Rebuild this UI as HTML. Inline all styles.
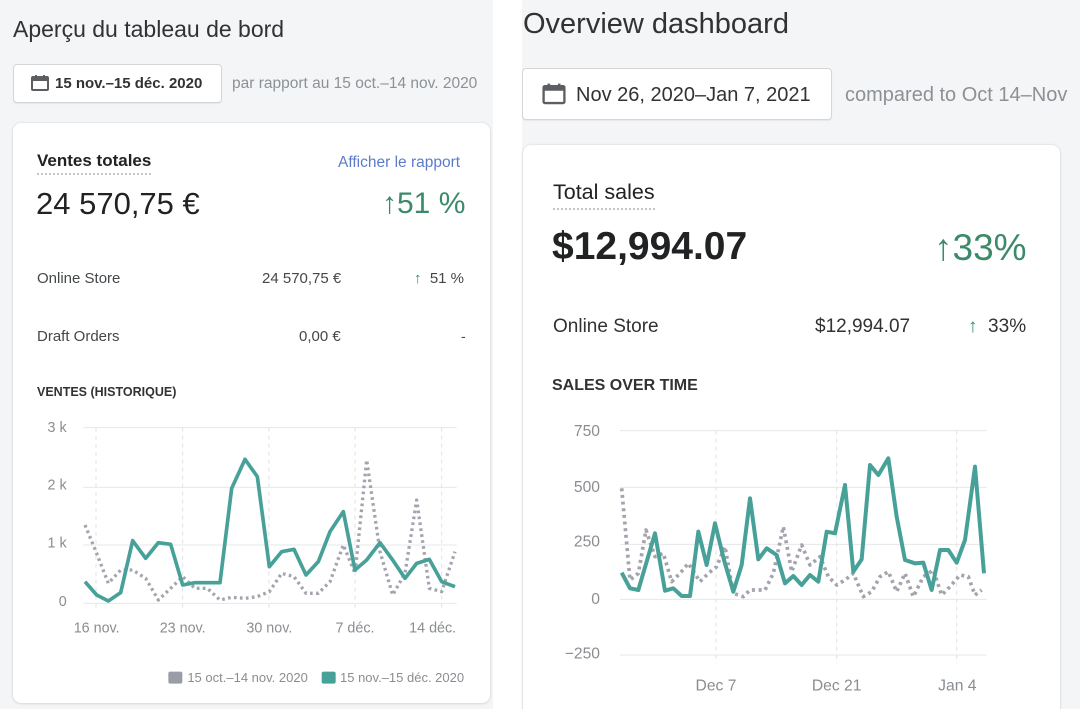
<!DOCTYPE html>
<html><head><meta charset="utf-8"><style>
*{margin:0;padding:0;box-sizing:border-box}
html,body{width:1080px;height:709px;overflow:hidden}
body{background:#fff;font-family:"Liberation Sans",sans-serif;color:#202223;position:relative}
.a{position:absolute;white-space:nowrap}
.bg{position:absolute;background:#f4f5f6}
.card{position:absolute;background:#fff;border-radius:8px;box-shadow:0 0 2px rgba(0,0,0,.12),0 1px 3px rgba(0,0,0,.08)}
.btn{position:absolute;background:#fff;border:1px solid #d4d6d8;border-radius:4px;box-shadow:0 1px 1px rgba(0,0,0,.06)}
.ul{border-bottom:2px dotted #c4c6c8}
</style></head><body>
<div class="bg" style="left:0;top:0;width:493px;height:709px"></div>
<div class="bg" style="left:522px;top:0;width:558px;height:709px"></div>

<!-- LEFT -->
<div class="a" style="left:13px;top:16px;font-size:23px;color:#303234">Aperçu du tableau de bord</div>
<div class="btn" style="left:13px;top:64px;width:209px;height:39px"></div>
<svg class="a" style="left:30px;top:73px" width="20" height="20" viewBox="0 0 20 20"><rect x="2" y="4" width="16" height="13" rx="1" fill="none" stroke="#5c5f62" stroke-width="2"/><rect x="2" y="4" width="16" height="4" fill="#5c5f62"/><rect x="5" y="2" width="2" height="3" fill="#5c5f62"/><rect x="13" y="2" width="2" height="3" fill="#5c5f62"/></svg>
<div class="a" style="left:55px;top:75px;font-size:15px;font-weight:bold;color:#303234">15 nov.–15 déc. 2020</div>
<div class="a" style="left:232px;top:75px;font-size:15.5px;color:#8c9196">par rapport au 15 oct.–14 nov. 2020</div>
<div class="card" style="left:13px;top:123px;width:477px;height:580px"></div>
<div class="a ul" style="left:37px;top:151px;font-size:17px;font-weight:bold;color:#202223;padding-bottom:2px">Ventes totales</div>
<div class="a" style="left:338px;top:154px;font-size:15.5px;color:#5c7cc8">Afficher le rapport</div>
<div class="a" style="left:36px;top:186px;font-size:31px;color:#202223">24 570,75 €</div>
<div class="a" style="left:382px;top:187px;font-size:30px;color:#3d8a6a">↑51 %</div>
<div class="a" style="left:37px;top:270px;font-size:15px;color:#44474a">Online Store</div>
<div class="a" style="left:262px;top:270px;font-size:15px;color:#44474a">24 570,75 €</div>
<div class="a" style="left:414px;top:270px;font-size:15px;color:#44474a"><span style="color:#3d8a6a">↑</span>&nbsp; 51 %</div>
<div class="a" style="left:37px;top:328px;font-size:15px;color:#44474a">Draft Orders</div>
<div class="a" style="left:299px;top:328px;font-size:15px;color:#44474a">0,00 €</div>
<div class="a" style="left:461px;top:328px;font-size:14px;color:#44474a">-</div>
<div class="a" style="left:37px;top:385px;font-size:12.5px;font-weight:bold;color:#303234">VENTES (HISTORIQUE)</div>

<svg class="a" style="left:0;top:400px" width="500" height="309" viewBox="0 0 1500 927">
<g stroke="#e6e7e9" stroke-width="3"><line x1="250" y1="83" x2="1370" y2="83"/><line x1="250" y1="262" x2="1370" y2="262"/><line x1="250" y1="435" x2="1370" y2="435"/><line x1="250" y1="610" x2="1370" y2="610"/></g>
<g stroke="#e0e1e3" stroke-width="3" stroke-dasharray="12 12"><line x1="288" y1="83" x2="288" y2="630"/><line x1="548" y1="83" x2="548" y2="630"/><line x1="807" y1="83" x2="807" y2="630"/><line x1="1065" y1="83" x2="1065" y2="630"/><line x1="1325" y1="83" x2="1325" y2="630"/></g>
<g font-size="43" fill="#8a8d91" font-family="Liberation Sans,sans-serif"><text x="200" y="96" text-anchor="end">3 k</text><text x="200" y="268" text-anchor="end">2 k</text><text x="200" y="442" text-anchor="end">1 k</text><text x="200" y="618" text-anchor="end">0</text>
<text x="290" y="697" text-anchor="middle">16 nov.</text><text x="548" y="697" text-anchor="middle">23 nov.</text><text x="808" y="697" text-anchor="middle">30 nov.</text><text x="1065" y="697" text-anchor="middle">7 déc.</text><text x="1298" y="697" text-anchor="middle">14 déc.</text>
<text x="562" y="846" font-size="39">15 oct.–14 nov. 2020</text><text x="1020" y="846" font-size="39">15 nov.–15 déc. 2020</text></g>
<rect x="505" y="815" width="42" height="36" rx="6" fill="#9a9ca8"/><rect x="965" y="815" width="42" height="36" rx="6" fill="#47a199"/>
<polyline fill="none" stroke="#a3a4ad" stroke-width="10" stroke-dasharray="8 10" stroke-linejoin="round" points="255,375 290,460 325,550 362,510 398,510 437,535 475,600 512,565 548,530 585,565 622,565 660,600 695,592 735,595 772,590 808,575 845,520 882,530 918,580 955,580 990,545 1030,435 1065,520 1100,180 1140,455 1178,585 1215,520 1250,300 1288,565 1325,575 1365,455"/>
<polyline fill="none" stroke="#47a199" stroke-width="11" stroke-linejoin="round" points="255,545 290,585 325,603 362,578 398,422 437,475 475,428 512,433 548,555 585,548 622,548 660,548 695,265 735,178 772,230 808,500 845,455 882,448 918,525 955,485 990,395 1030,335 1065,510 1100,480 1140,428 1178,480 1215,535 1250,490 1288,478 1325,545 1365,560"/>
</svg>

<!-- RIGHT -->
<div class="a" style="left:523px;top:8px;font-size:29px;color:#303234">Overview dashboard</div>
<div class="btn" style="left:522px;top:68px;width:310px;height:52px"></div>
<svg class="a" style="left:541px;top:81px" width="26" height="26" viewBox="0 0 20 20"><rect x="2" y="4" width="16" height="13" rx="1" fill="none" stroke="#5c5f62" stroke-width="1.8"/><rect x="2" y="4" width="16" height="3.5" fill="#5c5f62"/><rect x="5" y="2" width="2" height="3" fill="#5c5f62"/><rect x="13" y="2" width="2" height="3" fill="#5c5f62"/></svg>
<div class="a" style="left:576px;top:84px;font-size:20px;color:#303234">Nov 26, 2020–Jan 7, 2021</div>
<div class="a" style="left:845px;top:84px;font-size:20px;color:#8c9196">compared to Oct 14–Nov</div>
<div class="card" style="left:523px;top:145px;width:537px;height:580px"></div>
<div class="a ul" style="left:553px;top:180px;font-size:21.5px;color:#202223;padding-bottom:3px">Total sales</div>
<div class="a" style="left:552px;top:225px;font-size:39px;font-weight:bold;color:#202223">$12,994.07</div>
<div class="a" style="left:934px;top:227px;font-size:37px;color:#3d8a6a">↑33%</div>
<div class="a" style="left:553px;top:316px;font-size:19px;color:#303234">Online Store</div>
<div class="a" style="left:815px;top:316px;font-size:19px;color:#303234">$12,994.07</div>
<div class="a" style="left:968px;top:316px;font-size:19px;color:#303234"><span style="color:#3d8a6a">↑</span>&nbsp; 33%</div>
<div class="a" style="left:552px;top:377px;font-size:16px;font-weight:bold;color:#303234">SALES OVER TIME</div>

<svg class="a" style="left:520px;top:400px" width="560" height="309" viewBox="0 0 1680 927">
<g stroke="#e6e7e9" stroke-width="3"><line x1="300" y1="92" x2="1400" y2="92"/><line x1="300" y1="262" x2="1400" y2="262"/><line x1="300" y1="433" x2="1400" y2="433"/><line x1="300" y1="598" x2="1400" y2="598"/><line x1="300" y1="765" x2="1400" y2="765"/></g>
<g stroke="#e0e1e3" stroke-width="3" stroke-dasharray="12 12"><line x1="588" y1="92" x2="588" y2="790"/><line x1="950" y1="92" x2="950" y2="790"/><line x1="1310" y1="92" x2="1310" y2="790"/></g>
<g font-size="47" fill="#8a8d91" font-family="Liberation Sans,sans-serif"><text x="240" y="108" text-anchor="end">750</text><text x="240" y="276" text-anchor="end">500</text><text x="240" y="440" text-anchor="end">250</text><text x="240" y="612" text-anchor="end">0</text><text x="240" y="775" text-anchor="end">−250</text>
<text x="588" y="872" text-anchor="middle">Dec 7</text><text x="950" y="872" text-anchor="middle">Dec 21</text><text x="1312" y="872" text-anchor="middle">Jan 4</text></g>
<polyline fill="none" stroke="#a3a4ad" stroke-width="11" stroke-dasharray="9 11" stroke-linejoin="round" points="305,265 320,430 330,540 355,520 378,390 405,470 430,460 455,545 480,520 505,490 540,545 565,520 590,500 615,440 640,580 670,590 690,570 715,570 735,570 760,520 790,380 815,515 845,435 870,495 900,470 925,530 950,555 975,540 1000,520 1030,590 1055,575 1080,530 1105,515 1130,575 1155,520 1180,590 1210,530 1240,510 1265,585 1290,560 1320,525 1345,530 1365,585 1385,570"/>
<polyline fill="none" stroke="#47a199" stroke-width="12" stroke-linejoin="round" points="305,518 330,565 355,570 405,400 435,572 460,565 485,588 510,588 535,395 560,495 585,370 612,480 640,575 665,495 690,295 715,478 740,445 770,465 795,550 820,528 845,555 870,525 895,545 920,395 945,400 975,255 1000,515 1025,478 1050,195 1075,225 1105,175 1130,350 1155,480 1185,490 1210,488 1235,570 1260,450 1285,450 1310,488 1335,420 1365,200 1392,520"/>
</svg>
</body></html>
